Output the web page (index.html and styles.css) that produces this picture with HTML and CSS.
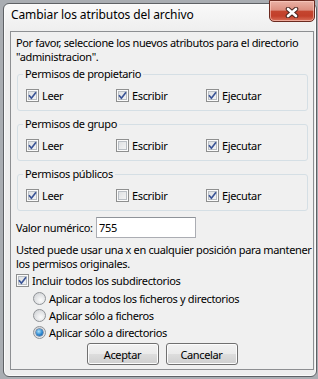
FILE: index.html
```html
<!DOCTYPE html>
<html lang="es">
<head>
    <meta charset="UTF-8">
    <meta name="viewport" content="width=device-width, initial-scale=1.0">
    <title>Cambiar los atributos del archivo</title>
    <link rel="stylesheet" href="styles.css">
</head>
<body>
    <div class="window">
        <!-- Title bar -->
        <div class="titlebar">
            <span class="title">Cambiar los atributos del archivo</span>
            <button class="close" type="button">
                <svg width="16" height="11" viewBox="0 0 16 11">
                    <path d="M4 2L12 9M12 2L4 9" stroke="#4a2620" stroke-width="4.6" stroke-linecap="round"/>
                    <path d="M4 2L12 9M12 2L4 9" stroke="#fff" stroke-width="2.6" stroke-linecap="round"/>
                </svg>
            </button>
        </div>

        <!-- Dialog contents -->
        <div class="client">
            <p class="intro">Por favor, seleccione los nuevos atributos para el directorio<br>"administracion".</p>

            <fieldset class="group">
                <legend>Permisos de propietario</legend>
                <div class="perm-row">
                    <label class="check"><span class="box checked"><svg width="11" height="11" viewBox="0 0 11 11"><path d="M2 5.3l2.4 2.9L9 2.3"/></svg></span>Leer</label>
                    <label class="check"><span class="box checked"><svg width="11" height="11" viewBox="0 0 11 11"><path d="M2 5.3l2.4 2.9L9 2.3"/></svg></span>Escribir</label>
                    <label class="check"><span class="box checked"><svg width="11" height="11" viewBox="0 0 11 11"><path d="M2 5.3l2.4 2.9L9 2.3"/></svg></span>Ejecutar</label>
                </div>
            </fieldset>

            <fieldset class="group">
                <legend>Permisos de grupo</legend>
                <div class="perm-row">
                    <label class="check"><span class="box checked"><svg width="11" height="11" viewBox="0 0 11 11"><path d="M2 5.3l2.4 2.9L9 2.3"/></svg></span>Leer</label>
                    <label class="check"><span class="box"></span>Escribir</label>
                    <label class="check"><span class="box checked"><svg width="11" height="11" viewBox="0 0 11 11"><path d="M2 5.3l2.4 2.9L9 2.3"/></svg></span>Ejecutar</label>
                </div>
            </fieldset>

            <fieldset class="group">
                <legend>Permisos públicos</legend>
                <div class="perm-row">
                    <label class="check"><span class="box checked"><svg width="11" height="11" viewBox="0 0 11 11"><path d="M2 5.3l2.4 2.9L9 2.3"/></svg></span>Leer</label>
                    <label class="check"><span class="box"></span>Escribir</label>
                    <label class="check"><span class="box checked"><svg width="11" height="11" viewBox="0 0 11 11"><path d="M2 5.3l2.4 2.9L9 2.3"/></svg></span>Ejecutar</label>
                </div>
            </fieldset>

            <div class="numeric">
                <span class="numeric-label">Valor numérico:</span>
                <input class="num-input" type="text" value="755">
            </div>

            <p class="hint">Usted puede usar una x en cualquier posición para mantener<br>los permisos originales.</p>

            <label class="check subdirs"><span class="box checked"><svg width="11" height="11" viewBox="0 0 11 11"><path d="M2 5.3l2.4 2.9L9 2.3"/></svg></span>Incluir todos los subdirectorios</label>

            <div class="radios">
                <label class="radio"><span class="dot"></span>Aplicar a todos los ficheros y directorios</label>
                <label class="radio"><span class="dot"></span>Aplicar sólo a ficheros</label>
                <label class="radio"><span class="dot selected"></span>Aplicar sólo a directorios</label>
            </div>

            <div class="buttons">
                <button class="btn" type="button">Aceptar</button>
                <button class="btn" type="button">Cancelar</button>
            </div>
        </div>
    </div>
</body>
</html>
```
FILE: styles.css
```css
/* Windows 7 style dialog */
body {
    margin: 0;
    padding: 3px 0 0 3px;
    background-color: #a9adb2;
    font-family: "Noto Sans", sans-serif;
    font-size: 11px;
    letter-spacing: -0.35px;
    color: #000;
}

.window {
    position: relative;
    width: 314px;
    box-sizing: border-box;
    padding: 0 2px 6px 6px;
    border: 1px solid #5e6165;
    border-radius: 6px;
    background: linear-gradient(#f9f9f9, #eeeeee 28px, #ededed);
    box-shadow: inset 0 0 0 1px #fbfbfb;
}

.titlebar {
    height: 27px;
}

.title {
    display: block;
    padding: 3px 0 0 1px;
    font-size: 12px;
    letter-spacing: -0.1px;
    line-height: 16px;
}

.close {
    position: absolute;
    top: -4px;
    right: 1px;
    width: 46px;
    height: 22px;
    padding: 3px 0 0;
    border: 1px solid #6b2a20;
    border-radius: 0 0 5px 5px;
    background: linear-gradient(#eab2a6 0%, #dc8f80 45%, #c4452f 52%, #c23f2a 75%, #d9705a 100%);
    box-shadow: inset 0 0 0 1px rgba(255, 210, 200, 0.6);
}

.close svg {
    display: block;
    margin: 0 auto;
}

.client {
    border: 1px solid #8d8f92;
    background-color: #f0f0f0;
    padding: 4px 5px 4px 5px;
}

.intro,
.hint {
    margin: 0;
    line-height: 14px;
    white-space: nowrap;
}

.group {
    margin: 3px 0 0 1px;
    padding: 7px 8px 8px 8px;
    border: 1px solid #d5dfe5;
    border-radius: 3px;
}

.group + .group {
    margin-top: 6px;
}

.group legend {
    margin-left: -3px;
    padding: 0 2px;
    line-height: 14px;
}

.perm-row {
    display: grid;
    grid-template-columns: 90px 90px auto;
}

.check {
    display: flex;
    align-items: center;
    gap: 3px;
    height: 14px;
}

.box {
    width: 13px;
    height: 13px;
    box-sizing: border-box;
    border: 1px solid #8e8f8f;
    background: linear-gradient(135deg, #d9dcdf, #f8f8f8);
    box-shadow: inset 0 0 0 1px #fbfbfb, inset 0 0 0 2px #b9bec4;
}

.box svg {
    display: block;
}

.box svg path {
    fill: none;
    stroke: #3a5497;
    stroke-width: 1.7;
}

.numeric {
    display: flex;
    align-items: center;
    margin-top: 6px;
}

.numeric-label {
    width: 80px;
}

.num-input {
    width: 100px;
    height: 21px;
    box-sizing: border-box;
    margin: 0;
    padding: 0 2px;
    border: 1px solid #abadb3;
    border-top-color: #8f9399;
    background: #fff;
    font-family: inherit;
    font-size: 11px;
    letter-spacing: inherit;
    color: #000;
    outline: none;
}

.hint {
    margin-top: 5px;
}

.subdirs {
    margin-top: 2px;
}

.radios {
    margin-top: 3px;
    padding-left: 17px;
}

.radio {
    display: flex;
    align-items: center;
    gap: 3px;
    height: 17px;
}

.dot {
    position: relative;
    width: 13px;
    height: 13px;
    box-sizing: border-box;
    border: 1px solid #8f9296;
    border-radius: 50%;
    background: radial-gradient(circle at 60% 65%, #fbfbfb, #d6d8db 75%);
}

.dot.selected::after {
    content: "";
    position: absolute;
    left: 2px;
    top: 2px;
    width: 7px;
    height: 7px;
    border-radius: 50%;
    background: radial-gradient(circle at 40% 35%, #aee3fb, #2b86cf 55%, #13508f);
    box-shadow: 0 0 0 0.5px #2a4a78;
}

.buttons {
    display: flex;
    justify-content: center;
    gap: 7px;
    margin-top: 2px;
}

.btn {
    width: 72px;
    height: 22px;
    padding: 0;
    border: 1px solid #707070;
    border-radius: 3px;
    background: linear-gradient(#f2f2f2 0%, #ebebeb 48%, #dddddd 52%, #cfcfcf 100%);
    box-shadow: inset 0 0 0 1px #fcfcfc;
    font-family: inherit;
    font-size: 11px;
    letter-spacing: inherit;
    color: #000;
}
```
